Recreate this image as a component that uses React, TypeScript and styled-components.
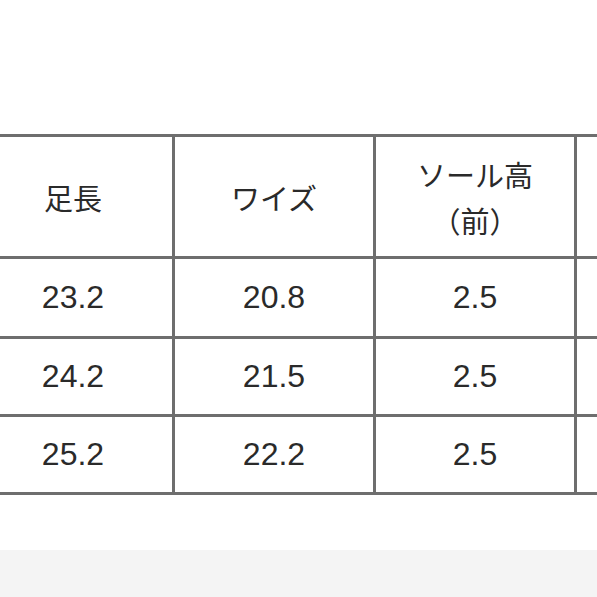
import React from 'react'
import styled, { createGlobalStyle } from 'styled-components'

const GlobalStyle = createGlobalStyle`
  html, body {
    margin: 0;
    padding: 0;
    background: #ffffff;
  }
  body {
    font-family: "Liberation Sans", "Noto Sans CJK JP", sans-serif;
    color: #222222;
    overflow: hidden;
  }
`

const Page = styled.div`
  width: 597px;
  height: 597px;
  display: flex;
  flex-direction: column;
  overflow: hidden;
`

const Sheet = styled.div`
  height: 550px;
  padding-top: 134px;
  box-sizing: border-box;
  background: #ffffff;
`

const Footer = styled.div`
  flex: 1;
  background: #f4f4f4;
`

const SizeTable = styled.table`
  border-collapse: collapse;
  table-layout: fixed;
  width: 804px;
  margin-left: -29px;
`

const Row = styled.tr<{ $h: number }>`
  height: ${(p) => p.$h}px;
`

const HeadCell = styled.th`
  border: 3px solid #6e6e6e;
  padding: 0;
  font-family: "Noto Sans CJK JP", "Liberation Sans", sans-serif;
  font-weight: 400;
  font-size: 29px;
  line-height: 46px;
  text-align: center;
  vertical-align: middle;
  color: #2a2a2a;
`

const Cell = styled.td`
  border: 3px solid #6e6e6e;
  padding: 0;
  font-size: 32px;
  text-align: center;
  vertical-align: middle;
  color: #2a2a2a;
`

const headers = [['足長'], ['ワイズ'], ['ソール高', '（前）'], ['']]

const rows = [
  { h: 80, cells: ['23.2', '20.8', '2.5', ''] },
  { h: 78, cells: ['24.2', '21.5', '2.5', ''] },
  { h: 78, cells: ['25.2', '22.2', '2.5', ''] },
]

export default function App() {
  return (
    <Page>
      <GlobalStyle />
      <Sheet>
        <SizeTable>
          <colgroup>
            <col style={{ width: 201 }} />
            <col style={{ width: 201 }} />
            <col style={{ width: 201 }} />
            <col style={{ width: 201 }} />
          </colgroup>
          <thead>
            <Row $h={122}>
              {headers.map((lines, i) => (
                <HeadCell key={i}>
                  {lines.map((l, j) => (
                    <div key={j}>{l}</div>
                  ))}
                </HeadCell>
              ))}
            </Row>
          </thead>
          <tbody>
            {rows.map((r, i) => (
              <Row key={i} $h={r.h}>
                {r.cells.map((c, j) => (
                  <Cell key={j}>{c}</Cell>
                ))}
              </Row>
            ))}
          </tbody>
        </SizeTable>
      </Sheet>
      <Footer />
    </Page>
  )
}
